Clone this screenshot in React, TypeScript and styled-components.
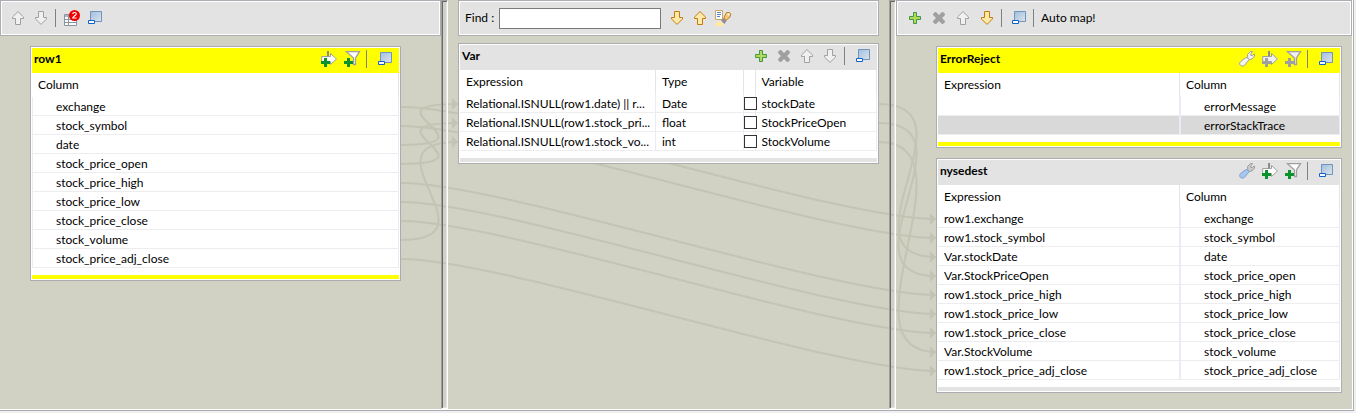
import React, { useLayoutEffect, useRef, useState } from "react";
import styled, { createGlobalStyle, css } from "styled-components";

const EDGE = "#abadb3";
const GREY = "#e3e3e3";
const CANVAS = "#d1d2c4";
const YELLOW = "#ffff00";

const GlobalStyle = createGlobalStyle`
  *, *::before, *::after { box-sizing: border-box; }
  html, body { margin: 0; padding: 0; }
  body {
    background: #f0f0f0;
    color: #000;
    font-family: Lato, "Open Sans", sans-serif;
    font-size: 12px;
    line-height: 16px;
  }
  button, input { font: inherit; color: inherit; }
`;

const Page = styled.div`
  display: flex;
  flex-direction: column;
  min-height: 100vh;
  padding: 0 2px 2px 0;
`;

const Mapper = styled.main`
  position: relative;
  flex: 1;
  display: grid;
  grid-template-columns: 441fr 7px 441fr 7px 456fr;
  background: ${CANVAS};
  border-right: 1px solid ${EDGE};
  border-bottom: 1px solid ${EDGE};
  box-shadow: inset -1px -1px #fff;
  padding: 0 1px 1px 0;
`;

const Links = styled.svg`
  position: absolute;
  left: 0;
  top: 0;
  width: 100%;
  height: 100%;
  pointer-events: none;
`;

const Zone = styled.div<{ $inset?: boolean }>`
  position: relative;
  min-width: 0;
  display: flex;
  flex-direction: column;
  gap: ${(p) => (p.$inset ? 7 : 10)}px;
  padding: 0 ${(p) => (p.$inset ? 10 : 0)}px 10px;
`;

const PanelStack = styled.div<{ $left: number; $right: number }>`
  display: flex;
  flex-direction: column;
  gap: 10px;
  padding: 0 ${(p) => p.$right}px 0 ${(p) => p.$left}px;
`;

const Sash = styled.div`
  position: relative;
  border: 1px solid;
  border-color: #a0a0a0 #fff #fff #a0a0a0;
  box-shadow: inset 1px 1px #696969, inset -1px -1px ${GREY};
`;

const framed = css`
  border: 1px solid ${EDGE};
  padding: 1px;
`;

const Toolbar = styled.div`
  ${framed}
  background: #fff;
`;

const ToolbarInner = styled.div<{ $gap?: number; $pad?: number }>`
  display: flex;
  align-items: center;
  gap: ${(p) => p.$gap ?? 7}px;
  height: 32px;
  padding: 0 ${(p) => p.$pad ?? 8}px;
  background: ${GREY};
`;

const Separator = styled.span<{ $before?: number; $after?: number }>`
  flex: none;
  width: 1px;
  height: 18px;
  margin: 0 ${(p) => p.$after ?? 3}px 0 ${(p) => p.$before ?? -1}px;
  background: #808080;
`;

const IconButton = styled.button`
  flex: none;
  display: block;
  width: 16px;
  height: 16px;
  padding: 0;
  border: 0;
  background: none;
  svg { display: block; overflow: visible; }
`;

const TextButton = styled.button`
  padding: 0;
  border: 0;
  background: none;
  white-space: nowrap;
`;

const FindLabel = styled.label`
  display: flex;
  align-items: center;
  gap: 5px;
  margin-right: 1px;
  white-space: nowrap;
`;

const FindInput = styled.input`
  width: 162px;
  height: 21px;
  padding: 0 4px;
  border: 1px solid #7a7a7a;
  background: #fff;
`;

const Panel = styled.section`
  ${framed}
  background: #fff;
`;

const TitleBar = styled.header<{ $fill: string }>`
  display: flex;
  align-items: center;
  gap: 7px;
  height: 25px;
  padding: 0 6px 3px 2px;
  background: ${(p) => p.$fill};
`;

const Title = styled.h2`
  flex: 1;
  min-width: 0;
  margin: 0;
  font-size: 12px;
  line-height: 16px;
  font-weight: 700;
`;

const FootBar = styled.div<{ $fill: string }>`
  height: 4px;
  margin-top: 7px;
  background: ${(p) => p.$fill};
`;

const Grid = styled.table`
  width: 100%;
  table-layout: fixed;
  border-collapse: separate;
  border-spacing: 0;
`;

const HeadCell = styled.th`
  height: 24px;
  padding: 0 6px;
  border-right: 1px solid #e5e5e5;
  font-weight: 400;
  text-align: left;
  white-space: nowrap;
`;

const Row = styled.tr<{ $selected?: boolean }>`
  background: ${(p) => (p.$selected ? "#d9d9d9" : "#fff")};
`;

const Cell = styled.td<{ $indent?: boolean }>`
  height: 19px;
  padding: 2px 0 0 ${(p) => (p.$indent ? 24 : 6)}px;
  border-right: 1px solid #e8ecf4;
  border-bottom: 1px solid #ededf0;
  box-shadow: inset 1px 0 ${(p) => (p.$indent ? "#e8ecf4" : "transparent")};
  line-height: 16px;
  white-space: nowrap;
`;

const CheckCell = styled(Cell)`
  padding: 0;
`;

const Check = styled.input`
  appearance: none;
  position: relative;
  display: block;
  width: 13px;
  height: 13px;
  margin: 0;
  border: 1px solid #333;
  background: #fff;
`;

/* ---------- icons ---------- */

const Svg = ({ children }: { children: React.ReactNode }) => (
  <svg width="16" height="16" viewBox="0 0 16 16" aria-hidden="true">
    {children}
  </svg>
);

const Arrow = ({ down, gold }: { down?: boolean; gold?: boolean }) => (
  <Svg>
    <path
      d="M8 1.6 13.5 7v1.5h-3v6h-5v-6h-3V7Z"
      transform={down ? "rotate(180 8 8)" : undefined}
      fill={gold ? "#ffe9a8" : "#f0f0f0"}
      stroke={gold ? "#c27c0e" : "#a0a0a0"}
    />
  </Svg>
);

const Plus = () => (
  <Svg>
    <path d="M6.5 2.5h3v4h4v3h-4v4h-3v-4h-4v-3h4Z" fill="#b4d858" stroke="#3d9848" />
  </Svg>
);

const Cross = () => (
  <Svg>
    <path d="M2 4 4 2h1l3 3 3-3h1l2 2v1l-3 3 3 3v1l-2 2h-1l-3-3-3 3H4l-2-2v-1l3-3-3-3Z" fill="#a0a0a0" />
  </Svg>
);

const Restore = () => (
  <Svg>
    <defs>
      <linearGradient id="screen" x1="0" y1="0" x2="1" y2="1">
        <stop offset="0" stopColor="#9fbfe0" />
        <stop offset="1" stopColor="#dfe3ea" />
      </linearGradient>
    </defs>
    <path d="M3.5 1.5h11v10h-11Z" fill="url(#screen)" stroke="#6f94be" />
    <path d="M1.5 10.5h6v3h-6Z" fill="#fff" stroke="#1263c8" />
  </Svg>
);

const Problems = () => (
  <Svg>
    <path d="M.5 4.5h12v11H.5Z" fill="#fff" stroke="#8795a3" />
    <path d="M1 5h11v2H1Z" fill="#aab4be" />
    <path d="M1 9.5h11M1 12.5h11M4.5 5v10" stroke="#8795a3" fill="none" />
    <circle cx="10.5" cy="5.5" r="5.5" fill="#f00000" />
    <path d="M8.7 4c0-2 3.6-2 3.6 0 0 1.5-3.5 2.2-3.5 4h3.8" fill="none" stroke="#fff" strokeWidth="1.2" />
  </Svg>
);

const FindAll = () => (
  <Svg>
    <path d="M.5.5h7v9h-7Z" fill="#fff" stroke="#c9a566" />
    <path d="M2 2.5h4M2 4.5h4M2 6.5h3" stroke="#5b86bd" />
    <path d="M5 11 9 14.500 7.500 16H0l1-3Z" fill="#ffeaa0" />
    <path d="m6 10.500 2.500-2.500 3 3L9.500 14Z" fill="#8e8e96" />
    <path d="m9 7.500 2.500-5h3l1.300 1.500-.8 3-4 3.500Z" fill="#f6c777" stroke="#b9823a" />
    <circle cx="13.5" cy="4.5" r="1" fill="#fff" />
  </Svg>
);

const AddColumn = ({ off }: { off?: boolean }) => (
  <Svg>
    <path d="M.7 5.5h8.800V2.500l6 5.500-6 5.500v-3H.7Z" fill={off ? "#f0f0f0" : "#fff"} stroke="#a0a0a0" />
    <path d="M7 0v5" stroke="#8c8c8c" strokeWidth="2" />
    <path d="M3 7h3v3h3v3H6v3H3v-3H0v-3h3Z" fill={off ? "#a0a0a0" : "#0a932d"} />
  </Svg>
);

const AddFilter = ({ off }: { off?: boolean }) => (
  <Svg>
    <path
      d="M2.5.7h13L11.500 7v6.500h-2V7Z"
      fill={off ? "#f0f0f0" : "#fff"}
      stroke="#a0a0a0"
      strokeWidth="1.3"
    />
    <path d="M3 7h3v3h3v3H6v3H3v-3H0v-3h3Z" fill={off ? "#a0a0a0" : "#0a932d"} />
  </Svg>
);

const Wrench = ({ off }: { off?: boolean }) => (
  <Svg>
    <path
      d="M8.800 7.500 8.500 3.500 11.500.500h2L11.800 3v1.500h1.500L15.500 3v2l-2.500 3-3.500.500Z"
      fill={off ? "#f4f4f4" : "#c9c9c9"}
      stroke="#a0a0a0"
    />
    <path
      d="m8 6.500 2.300 2-4.800 5.800c-1.500 1.700-5.700.400-4.700-2.600.800-1.600 5.700-5.200 7.200-5.200Z"
      fill={off ? "#f4f4f4" : "#a9c6ef"}
      stroke={off ? "#a0a0a0" : "#7f9fce"}
    />
  </Svg>
);

/* ---------- data ---------- */

const inputColumns = [
  "exchange",
  "stock_symbol",
  "date",
  "stock_price_open",
  "stock_price_high",
  "stock_price_low",
  "stock_price_close",
  "stock_volume",
  "stock_price_adj_close",
];

const variables = [
  { expression: "Relational.ISNULL(row1.date) || r...", type: "Date", name: "stockDate" },
  { expression: "Relational.ISNULL(row1.stock_pri...", type: "float", name: "StockPriceOpen" },
  { expression: "Relational.ISNULL(row1.stock_vo...", type: "int", name: "StockVolume" },
];

type Output = { expression: string; column: string; selected?: boolean };

const rejectRows: Output[] = [
  { expression: "", column: "errorMessage" },
  { expression: "", column: "errorStackTrace", selected: true },
];

const destRows: Output[] = [
  { expression: "row1.exchange", column: "exchange" },
  { expression: "row1.stock_symbol", column: "stock_symbol" },
  { expression: "Var.stockDate", column: "date" },
  { expression: "Var.StockPriceOpen", column: "stock_price_open" },
  { expression: "row1.stock_price_high", column: "stock_price_high" },
  { expression: "row1.stock_price_low", column: "stock_price_low" },
  { expression: "row1.stock_price_close", column: "stock_price_close" },
  { expression: "Var.StockVolume", column: "stock_volume" },
  { expression: "row1.stock_price_adj_close", column: "stock_price_adj_close" },
];

const mappings: [string, string][] = [
  ["row1.date", "Var.stockDate"],
  ["row1.stock_price_open", "Var.StockPriceOpen"],
  ["row1.stock_volume", "Var.StockVolume"],
  ...destRows.map((r): [string, string] => [r.expression, `nysedest.${r.column}`]),
];

/* ---------- connections between rows ---------- */

type Link = { x1: number; y1: number; x2: number; y2: number };
const REACH = 100;

function useLinks(host: React.RefObject<HTMLElement | null>) {
  const [links, setLinks] = useState<Link[]>([]);

  useLayoutEffect(() => {
    const root = host.current;
    if (!root) return;
    const measure = () => {
      const base = root.getBoundingClientRect();
      const port = (id: string, side: "left" | "right") => {
        const row = root.querySelector(`[data-row="${id}"]`);
        const panel = row?.closest("section");
        if (!row || !panel) return null;
        const r = row.getBoundingClientRect();
        return {
          x: panel.getBoundingClientRect()[side] - base.left,
          y: Math.round(r.top + r.height / 2 - base.top),
        };
      };
      setLinks(
        mappings.flatMap(([from, to]) => {
          const a = port(from, "right");
          const b = port(to, "left");
          return a && b ? [{ x1: a.x, y1: a.y, x2: b.x, y2: b.y }] : [];
        })
      );
    };
    measure();
    const observer = new ResizeObserver(measure);
    observer.observe(root);
    return () => observer.disconnect();
  }, [host]);

  return links;
}

const Connections = ({ links }: { links: Link[] }) => (
  <Links aria-hidden="true">
    {links.map(({ x1, y1, x2, y2 }, i) => (
      <g key={i}>
        <path
          d={`M${x1} ${y1}C${x1 + REACH} ${y1} ${x2 - REACH} ${y2} ${x2} ${y2}`}
          fill="none"
          stroke="#c4c4b4"
          strokeWidth="2"
        />
        <path d={`M${x2 - 6} ${y2 - 6}l6 6-6 6Z`} fill="#c4c4b4" />
      </g>
    ))}
  </Links>
);

/* ---------- panels ---------- */

const Tool = ({ label, children }: { label: string; children: React.ReactNode }) => (
  <IconButton type="button" aria-label={label} title={label}>
    {children}
  </IconButton>
);

const OutputPanel = ({ name, rows, fill, off }: { name: string; rows: Output[]; fill: string; off?: boolean }) => (
  <Panel>
    <TitleBar $fill={fill}>
      <Title>{name}</Title>
      <Tool label="Settings"><Wrench off={off} /></Tool>
      <Tool label="Add column"><AddColumn off={off} /></Tool>
      <Tool label="Add filter"><AddFilter off={off} /></Tool>
      <Separator />
      <Tool label="Minimize"><Restore /></Tool>
    </TitleBar>
    <Grid>
      <colgroup>
        <col />
        <col width="160" />
      </colgroup>
      <thead>
        <tr>
          <HeadCell>Expression</HeadCell>
          <HeadCell>Column</HeadCell>
        </tr>
      </thead>
      <tbody>
        {rows.map((r) => (
          <Row key={r.column} $selected={r.selected} data-row={`${name}.${r.column}`}>
            <Cell>{r.expression}</Cell>
            <Cell $indent>{r.column}</Cell>
          </Row>
        ))}
      </tbody>
    </Grid>
    <FootBar $fill={fill} />
  </Panel>
);

export default function App() {
  const mapper = useRef<HTMLElement>(null);
  const links = useLinks(mapper);
  return (
    <Page>
      <GlobalStyle />
      <Mapper ref={mapper}>
        <Connections links={links} />
        <Zone>
          <Toolbar>
            <ToolbarInner>
              <Tool label="Move up"><Arrow /></Tool>
              <Tool label="Move down"><Arrow down /></Tool>
              <Separator $after={1} />
              <Tool label="Problems"><Problems /></Tool>
              <Tool label="Minimize all"><Restore /></Tool>
            </ToolbarInner>
          </Toolbar>
          <PanelStack $left={30} $right={40}>
            <Panel>
              <TitleBar $fill={YELLOW}>
                <Title>row1</Title>
                <Tool label="Add column"><AddColumn /></Tool>
                <Tool label="Add filter"><AddFilter /></Tool>
                <Separator />
                <Tool label="Minimize"><Restore /></Tool>
              </TitleBar>
              <Grid>
                <thead>
                  <tr>
                    <HeadCell>Column</HeadCell>
                  </tr>
                </thead>
                <tbody>
                  {inputColumns.map((c) => (
                    <Row key={c} data-row={`row1.${c}`}>
                      <Cell $indent>{c}</Cell>
                    </Row>
                  ))}
                </tbody>
              </Grid>
              <FootBar $fill={YELLOW} />
            </Panel>
          </PanelStack>
        </Zone>
        <Sash />
        <Zone $inset>
          <Toolbar>
            <ToolbarInner $pad={5}>
              <FindLabel>
                Find :
                <FindInput type="text" />
              </FindLabel>
              <Tool label="Find next"><Arrow down gold /></Tool>
              <Tool label="Find previous"><Arrow gold /></Tool>
              <Tool label="Highlight all"><FindAll /></Tool>
            </ToolbarInner>
          </Toolbar>
          <Panel>
            <TitleBar $fill={GREY}>
              <Title>Var</Title>
              <Tool label="Add variable"><Plus /></Tool>
              <Tool label="Remove variable"><Cross /></Tool>
              <Tool label="Move up"><Arrow /></Tool>
              <Tool label="Move down"><Arrow down /></Tool>
              <Separator />
              <Tool label="Minimize"><Restore /></Tool>
            </TitleBar>
            <Grid>
              <colgroup>
                <col width="47%" />
                <col width="21%" />
                <col width="12" />
                <col />
              </colgroup>
              <thead>
                <tr>
                  <HeadCell>Expression</HeadCell>
                  <HeadCell>Type</HeadCell>
                  <HeadCell />
                  <HeadCell>Variable</HeadCell>
                </tr>
              </thead>
              <tbody>
                {variables.map((v) => (
                  <Row key={v.name} data-row={`Var.${v.name}`}>
                    <Cell>{v.expression}</Cell>
                    <Cell>{v.type}</Cell>
                    <CheckCell>
                      <Check type="checkbox" aria-label={`${v.name} nullable`} />
                    </CheckCell>
                    <Cell>{v.name}</Cell>
                  </Row>
                ))}
              </tbody>
            </Grid>
            <FootBar $fill={GREY} />
          </Panel>
        </Zone>
        <Sash />
        <Zone>
          <Toolbar>
            <ToolbarInner $gap={8} $pad={9}>
              <Tool label="Add output"><Plus /></Tool>
              <Tool label="Remove output"><Cross /></Tool>
              <Tool label="Move up"><Arrow /></Tool>
              <Tool label="Move down"><Arrow down gold /></Tool>
              <Separator $before={-2} $after={1} />
              <Tool label="Minimize all"><Restore /></Tool>
              <Separator $before={-2} $after={-1} />
              <TextButton type="button">Auto map!</TextButton>
            </ToolbarInner>
          </Toolbar>
          <PanelStack $left={40} $right={10}>
            <OutputPanel name="ErrorReject" rows={rejectRows} fill={YELLOW} off />
            <OutputPanel name="nysedest" rows={destRows} fill={GREY} />
          </PanelStack>
        </Zone>
      </Mapper>
    </Page>
  );
}
